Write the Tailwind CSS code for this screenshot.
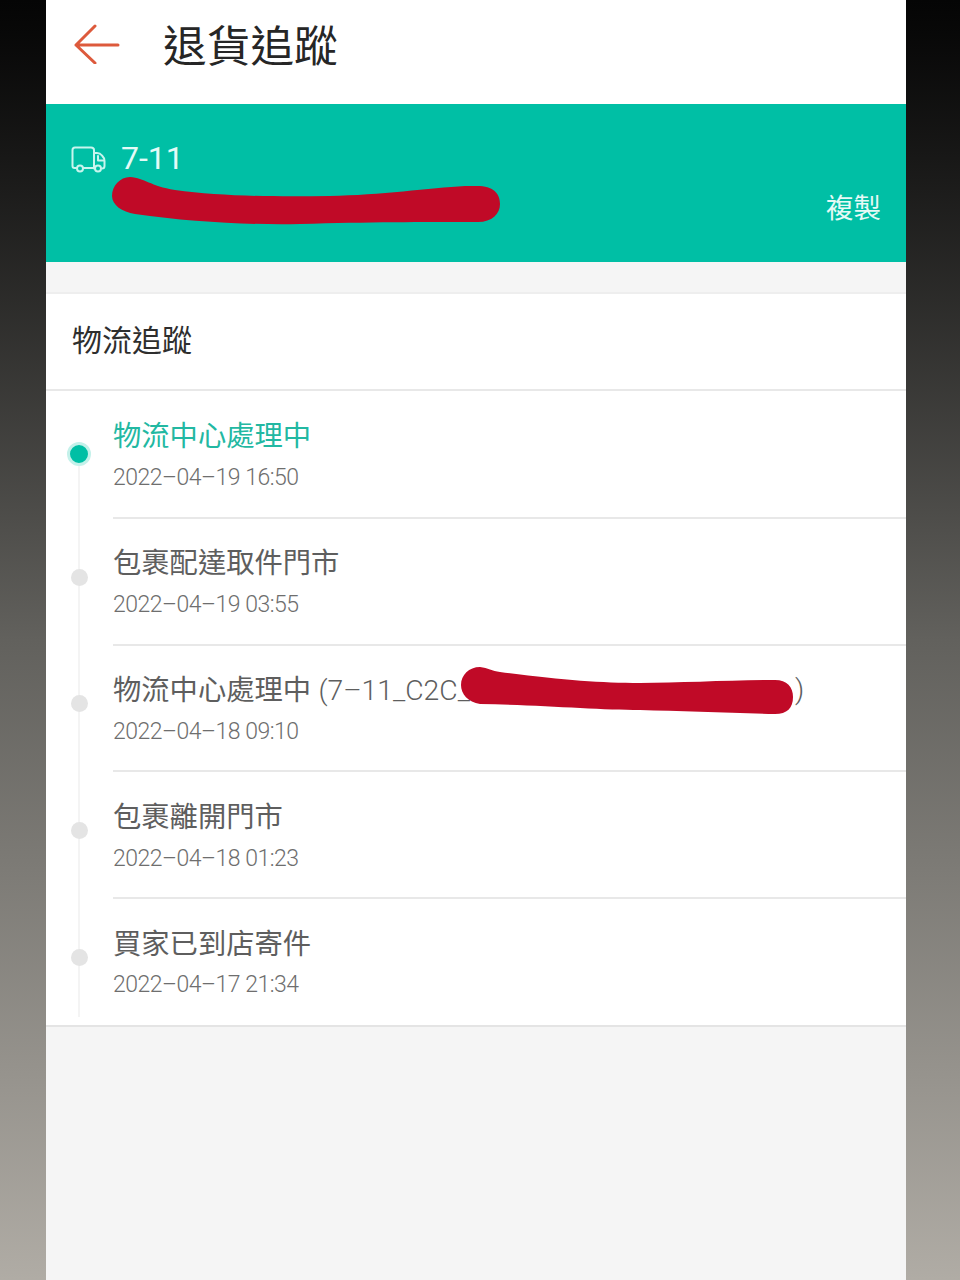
<!DOCTYPE html>
<html lang="zh-Hant">
<head>
    <meta charset="UTF-8">
    <meta name="viewport" content="width=device-width,initial-scale=1.0">
    <title>退貨追蹤</title>
    <script src="https://cdn.jsdelivr.net/npm/@tailwindcss/browser@4"></script>
</head>
<body class="bg-black">
    <div class="pl-[46px] h-[1280px] overflow-hidden bg-gradient-to-b from-[#050505] via-[#62615d] via-[50%] to-[#b0aca5] font-['Roboto','Noto_Sans_CJK_TC',sans-serif]">
        <div class="w-[860px] h-full bg-[#f5f5f5] flex flex-col">
            <!-- header -->
            <div class="h-[104px] bg-white flex items-center pl-[28px] pb-[16px]">
                <svg class="w-[46px] h-[40px]" viewBox="0 0 46 40" fill="none" stroke="#dd5a3c" stroke-width="3" stroke-linecap="round" stroke-linejoin="round">
                    <path d="M21 2 L2 21 L21 39 M2 21 H44"/>
                </svg>
                <h1 class="ml-[43px] text-[43.700px] leading-none text-[#262626] font-normal font-['Noto_Sans_CJK_TC',sans-serif]">退貨追蹤</h1>
            </div>
            <!-- carrier -->
            <div class="relative h-[158px] bg-[#00bfa5] text-white">
                <div class="flex items-center pl-[25px] pt-[36px]">
                    <svg class="w-[35px] h-[28px] mt-[2px]" viewBox="0 0 35 28" fill="none" stroke="#c8f5ee" stroke-width="2" stroke-linecap="round" stroke-linejoin="round">
                        <path d="M6 23 H3.500 Q1.500 23 1.500 21 V5 Q1.500 2.500 4 2.500 H20 Q23 2.500 23 5 V23 H12"/>
                        <circle cx="9" cy="23.500" r="3"/>
                        <circle cx="27" cy="23.500" r="3"/>
                        <path d="M23 8 H26 Q29 8 31 10.500 Q33.500 13 33.500 16 V21 Q33.500 23.500 31 23.500 M23 23.500 H24 M27 11 V15.500 H33"/>
                    </svg>
                    <span class="ml-[15px] text-[32px] leading-[36px] text-[#e3fbf7]">7-11</span>
                </div>
                <span class="absolute right-[25px] top-[86px] text-[27.500px] leading-[32px] font-['Noto_Sans_CJK_TC',sans-serif] text-[#e6faf6]">複製</span>
                <svg class="absolute left-[60px] top-[68px]" width="400" height="60" viewBox="0 0 400 60">
                    <path fill="#c00a27" d="M24 5 C39 6 44 14 69 18 C114 24 164 25 224 24 C274 23 324 16 359 14 L374 14 C389 15 394 23 394 32 C394 42 386 50 372 50 C314 50 264 50 194 52 C144 53 84 50 29 42 C16 40 6 33 6 24 C6 14 14 5 24 5 Z"/>
                </svg>
            </div>
            <div class="h-[30px]"></div>
            <!-- tracking -->
            <div class="bg-white border-t-2 border-[#eeeeee]">
                <div class="h-[97px] flex items-center pl-[26px] pb-[6px] border-b-2 border-[#e8e8e8] text-[30px] text-[#2e2e2e] font-['Noto_Sans_CJK_TC',sans-serif]">物流追蹤</div>
                <div class="relative pl-[67px]">
                    <div class="absolute left-[32px] top-[64px] bottom-[8px] w-[2px] bg-[#f4f4f4]"></div>

                    <div class="relative h-[128px] border-b-2 border-[#e8e8e8] pt-[23px]">
                        <span class="absolute left-[-46px] top-[51px] w-[24px] h-[24px] rounded-full bg-[#00bfa5] border-[3px] border-[#c4f1ea]"></span>
                        <p class="text-[28.300px] leading-[40px] text-[#22b8a2] font-['Noto_Sans_CJK_TC',sans-serif]">物流中心處理中</p>
                        <p class="mt-[8px] text-[23px] tracking-[-0.5px] leading-[32px] font-light text-[#6e6e6e]">2022–04–19 16:50</p>
                    </div>

                    <div class="relative h-[127px] border-b-2 border-[#e8e8e8] pt-[22px]">
                        <span class="absolute left-[-42px] top-[50px] w-[17px] h-[17px] rounded-full bg-[#e4e4e4]"></span>
                        <p class="text-[28.300px] leading-[40px] text-[#5e5e5e] font-['Noto_Sans_CJK_TC',sans-serif]">包裹配達取件門市</p>
                        <p class="mt-[8px] text-[23px] tracking-[-0.5px] leading-[32px] font-light text-[#6e6e6e]">2022–04–19 03:55</p>
                    </div>

                    <div class="relative h-[126px] border-b-2 border-[#e8e8e8] pt-[22px]">
                        <span class="absolute left-[-42px] top-[49px] w-[17px] h-[17px] rounded-full bg-[#e4e4e4]"></span>
                        <p class="h-[40px] text-[28.300px] leading-[40px] text-[#5e5e5e] whitespace-nowrap font-['Noto_Sans_CJK_TC',sans-serif]">物流中心處理中 <span class="font-['Roboto'] font-light ml-[1px]">(7–11_C2C_</span><span class="absolute left-[682px] top-[24px] font-['Roboto'] font-light">)</span></p>
                        <p class="mt-[8px] text-[23px] tracking-[-0.5px] leading-[32px] font-light text-[#6e6e6e]">2022–04–18 09:10</p>
                        <svg class="absolute left-[330px] top-[10px]" width="370" height="70" viewBox="0 0 370 70">
                            <path fill="#c00a27" d="M37 11 C45 12 49 15 57 16 C117 24 157 27 197 27 C237 27 287 24 332 24 C344 24 350 31 350 41 C350 52 344 58 332 58 C287 57 237 55 197 54 C157 54 97 49 37 48 C25 46 18 38 18 29 C18 19 26 11 37 11 Z"/>
                        </svg>
                    </div>

                    <div class="relative h-[127px] border-b-2 border-[#e8e8e8] pt-[23px]">
                        <span class="absolute left-[-42px] top-[50px] w-[17px] h-[17px] rounded-full bg-[#e4e4e4]"></span>
                        <p class="text-[28.300px] leading-[40px] text-[#5e5e5e] font-['Noto_Sans_CJK_TC',sans-serif]">包裹離開門市</p>
                        <p class="mt-[8px] text-[23px] tracking-[-0.5px] leading-[32px] font-light text-[#6e6e6e]">2022–04–18 01:23</p>
                    </div>

                    <div class="relative h-[126px] pt-[23px]">
                        <span class="absolute left-[-42px] top-[50px] w-[17px] h-[17px] rounded-full bg-[#e4e4e4]"></span>
                        <p class="text-[28.300px] leading-[40px] text-[#5e5e5e] font-['Noto_Sans_CJK_TC',sans-serif]">買家已到店寄件</p>
                        <p class="mt-[7px] text-[23px] tracking-[-0.5px] leading-[32px] font-light text-[#6e6e6e]">2022–04–17 21:34</p>
                    </div>
                </div>
                <div class="h-[2px] bg-[#e4e4e4]"></div>
            </div>
        </div>
    </div>
</body>
</html>
